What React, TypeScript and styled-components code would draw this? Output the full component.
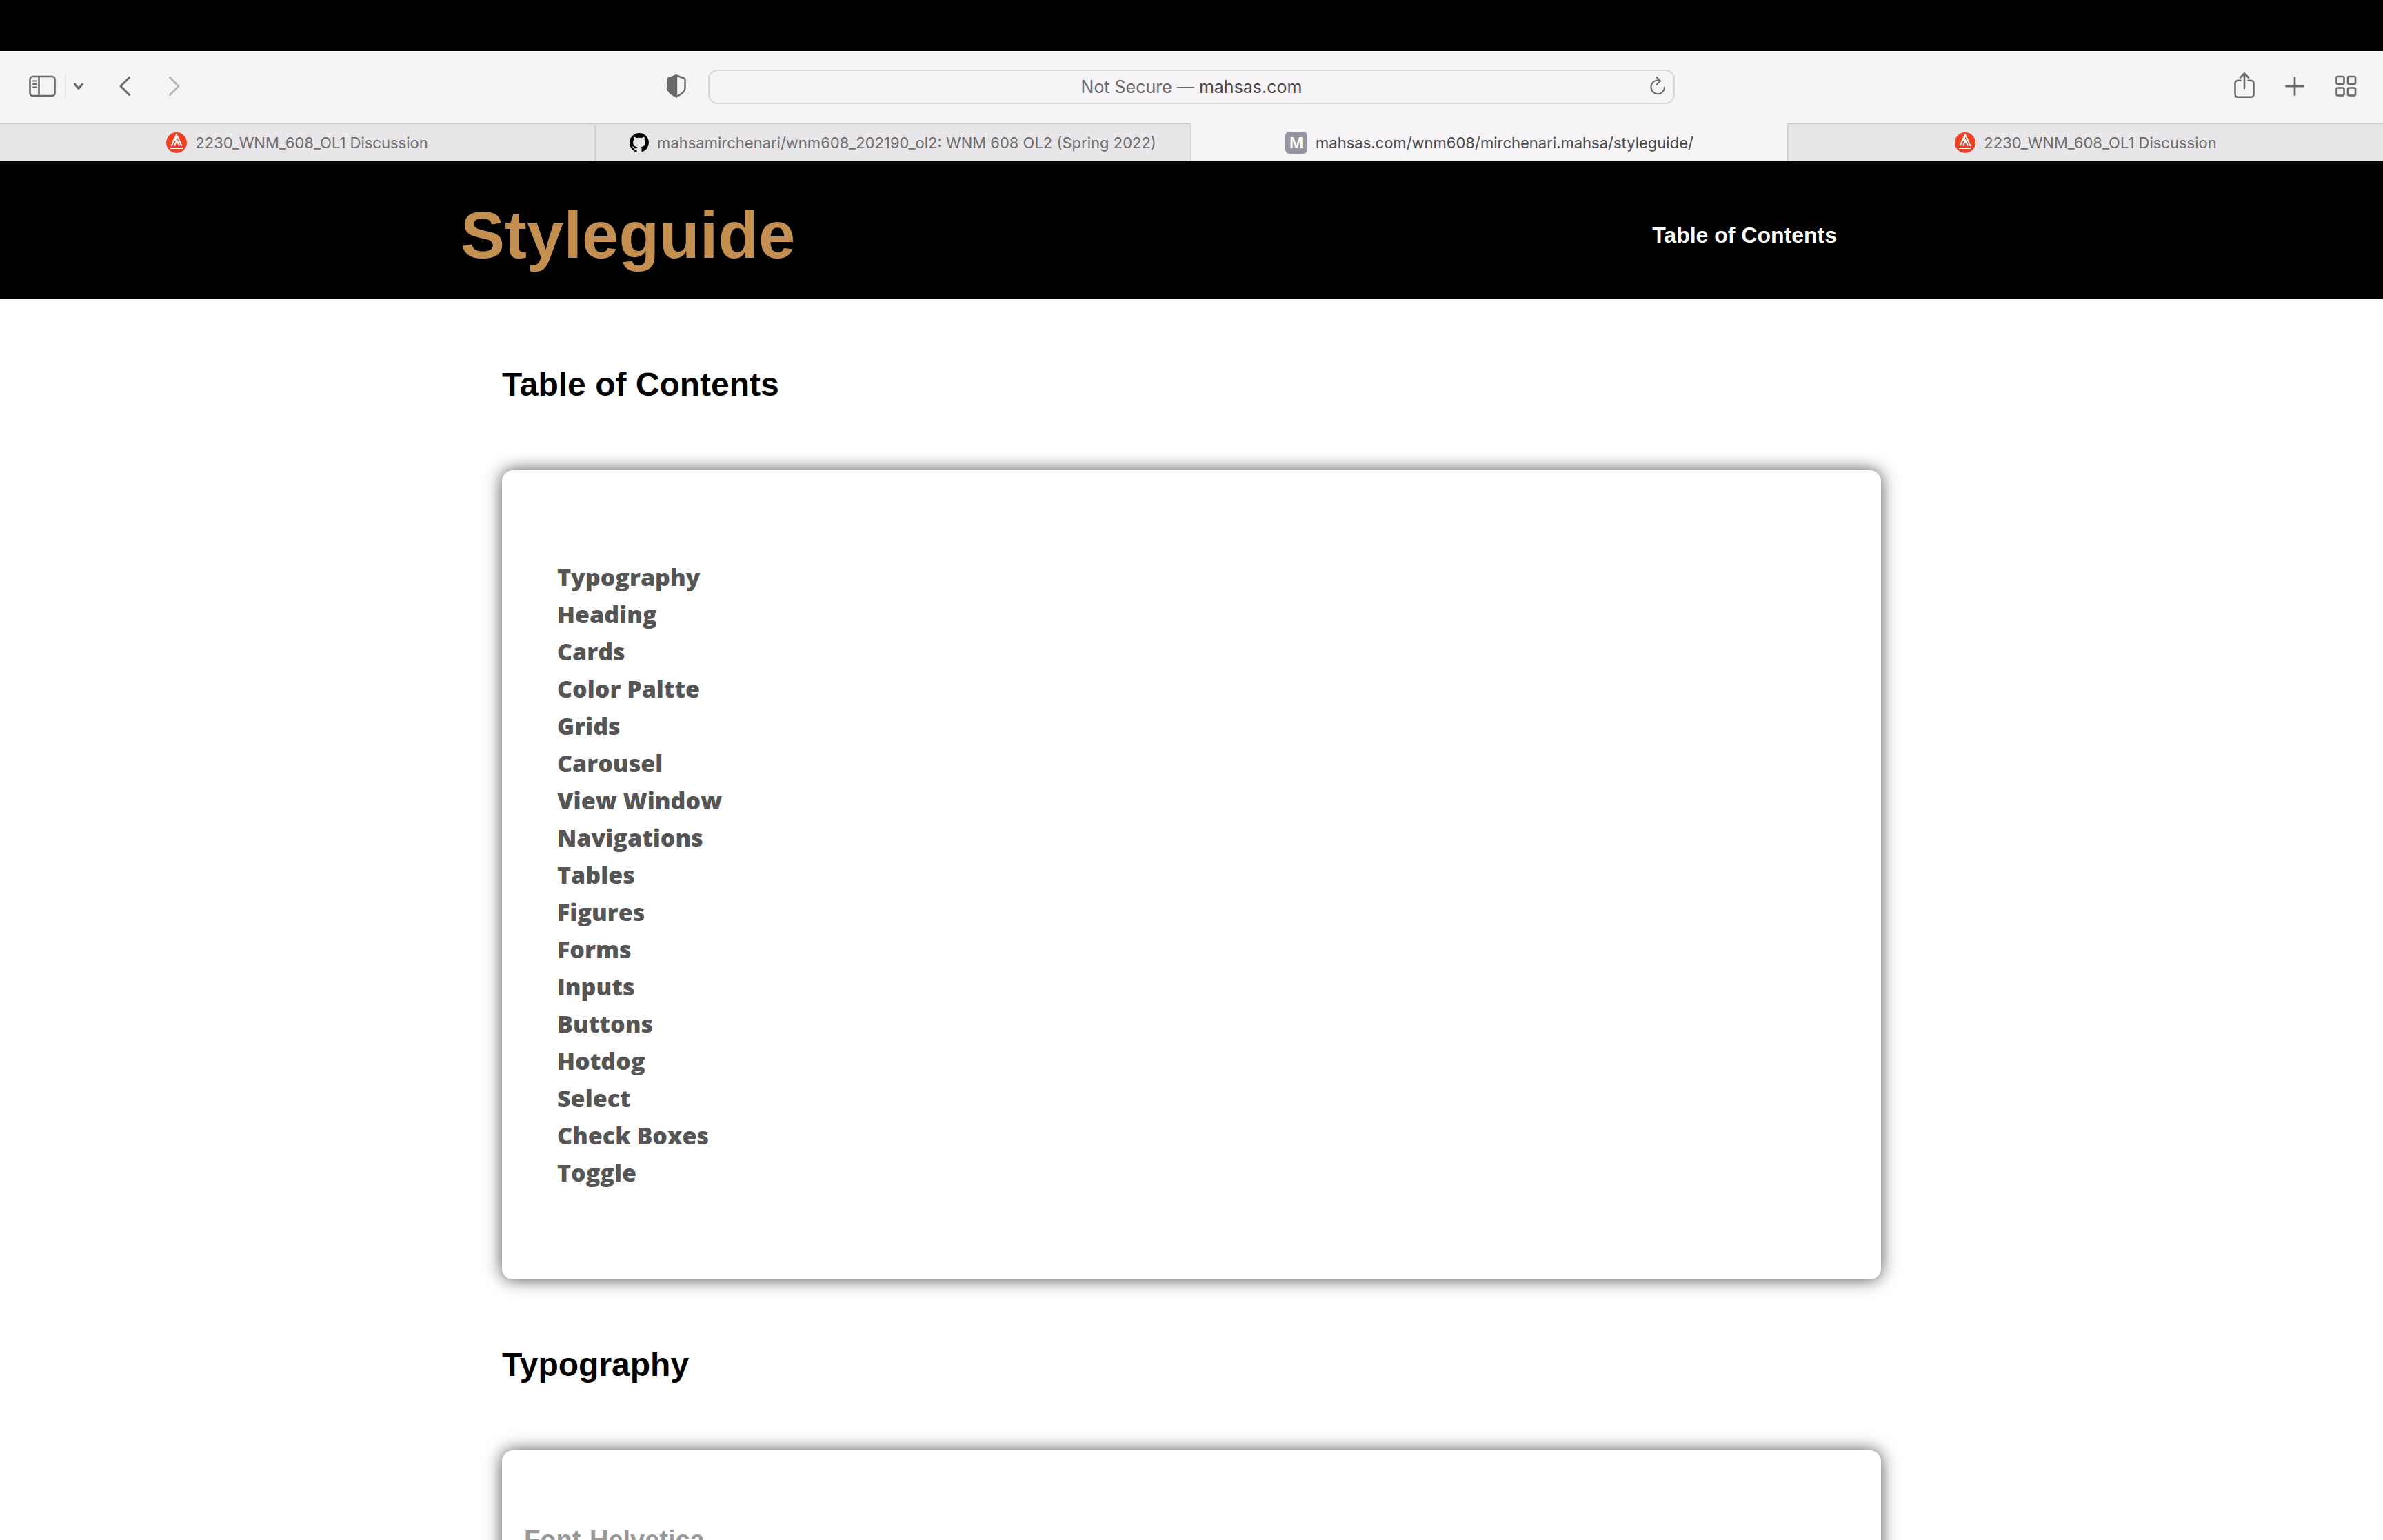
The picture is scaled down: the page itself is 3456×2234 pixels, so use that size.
import React from "react";
import styled, { createGlobalStyle } from "styled-components";

const chrome = `Inter, "Liberation Sans", sans-serif`;
const helvetica = `"Liberation Sans", Arial, sans-serif`;

const GlobalStyle = createGlobalStyle`
  *, *::before, *::after { box-sizing: border-box; }
  body { margin: 0; background: #fff; font-family: ${helvetica}; }
  button { padding: 0; border: 0; background: none; color: inherit; font: inherit; }
  a { color: inherit; text-decoration: none; }
`;

const Screen = styled.div`
  display: flex;
  flex-direction: column;
  height: 100vh;
  overflow: hidden;
`;

const CameraBar = styled.div`
  flex: none;
  height: 74px;
  background: #000;
`;

const Toolbar = styled.div`
  flex: none;
  display: grid;
  grid-template-columns: 1fr 1402px 1fr;
  align-items: center;
  height: 104px;
  background: #f6f4f6;
  color: #6a686a;
  font-family: ${chrome};
`;

const ToolGroup = styled.div<{ $end?: boolean }>`
  display: flex;
  align-items: center;
  justify-content: ${(p) => (p.$end ? "flex-end" : "flex-start")};
  padding: 0 38px 2px;
`;

const IconButton = styled.button<{ $gap?: number; $faded?: boolean }>`
  display: flex;
  margin-left: ${(p) => p.$gap ?? 0}px;
  opacity: ${(p) => (p.$faded ? 0.45 : 1)};
`;

const Separator = styled.span`
  width: 2px;
  height: 36px;
  margin-left: 12px;
  background: #e5e3e5;
`;

const ShieldButton = styled(IconButton)`
  margin-left: auto;
  margin-right: -6px;
`;

const AddressBar = styled.div`
  display: flex;
  align-items: center;
  height: 50px;
  padding: 0 10px 0 36px;
  border: 2px solid #d9d7d9;
  border-radius: 14px;
`;

const Address = styled.div`
  flex: 1;
  text-align: center;
  font-size: 25px;
  line-height: 32px;
  color: #6a686a;
`;

const Host = styled.span`
  color: #4a484a;
`;

const Tabs = styled.nav`
  flex: none;
  display: grid;
  grid-template-columns: repeat(4, 1fr);
  height: 56px;
  font-family: ${chrome};
  font-size: 22px;
  line-height: 28px;
`;

const Tab = styled.button<{ $active?: boolean; $edge?: "left" | "right" }>`
  display: flex;
  align-items: center;
  justify-content: center;
  gap: 12px;
  padding-top: 2px;
  color: ${(p) => (p.$active ? "#4a484a" : "#6f6d6f")};
  background: ${(p) =>
    p.$active ? "#f6f4f6" : "linear-gradient(#c4c2c4 1px, #dad8da 2px, #e8e6e8 6px)"};
  ${(p) => p.$edge && `border-${p.$edge}: 2px solid #d2d0d2;`}
`;

const LetterIcon = styled.span`
  width: 32px;
  height: 32px;
  border-radius: 6px;
  background: #9696a2;
  color: #fff;
  font-size: 22px;
  font-weight: 600;
  line-height: 32px;
  text-align: center;
`;

const Page = styled.div`
  flex: 1;
  min-height: 0;
  overflow: hidden;
`;

const Header = styled.header`
  height: 200px;
  padding: 14px 64px 0;
  background: #000;
`;

const HeaderInner = styled.div`
  display: flex;
  align-items: center;
  justify-content: space-between;
  max-width: 2120px;
  height: 100%;
  margin: 0 auto;
  padding-right: 124px;
`;

const SiteTitle = styled.h1`
  margin: 0;
  font-size: 96px;
  line-height: 112px;
  color: #c49052;
`;

const NavLink = styled.a`
  font-size: 32px;
  font-weight: 700;
  line-height: 40px;
  color: #fff;
`;

const Main = styled.main`
  max-width: 2000px;
  margin: 0 auto;
`;

const SectionTitle = styled.h2`
  margin: 0;
  padding: 96px 0;
  font-size: 48px;
  line-height: 56px;
  color: #000;
`;

const Card = styled.section<{ $inset: string }>`
  padding: ${(p) => p.$inset};
  border-radius: 16px;
  background: #fff;
  box-shadow: 0 0 24px rgba(0, 0, 0, 0.7);
`;

const Contents = styled.ul`
  margin: 0;
  padding: 0;
  list-style: none;
  font-family: "Open Sans", ${helvetica};
  font-size: 34px;
  font-weight: 800;
  line-height: 54px;
  color: #555;
`;

const Sample = styled.h3`
  margin: 0;
  font-size: 38px;
  line-height: 44px;
  color: #999;
`;

const line = { fill: "none", stroke: "currentColor", strokeLinecap: "round", strokeLinejoin: "round" } as const;

const SidebarIcon = () => (
  <svg width="44" height="36" viewBox="0 0 44 36" {...line} strokeWidth="2.6">
    <rect x="5.500" y="4" width="36" height="28" rx="4" />
    <path d="M18.500 4v28" />
    <path d="M10 10.500h4.500M10 15h4.500M10 19.500h4.500" strokeWidth="2" />
  </svg>
);

const DownIcon = () => (
  <svg width="16" height="12" viewBox="0 0 16 12" {...line} strokeWidth="3">
    <path d="M2.500 3l5.500 6.500L13.500 3" />
  </svg>
);

const BackIcon = () => (
  <svg width="18" height="30" viewBox="0 0 18 30" {...line} strokeWidth="3">
    <path d="M15.500 2.500L3 15l12.500 12.500" />
  </svg>
);

const ForwardIcon = () => (
  <svg width="18" height="30" viewBox="0 0 18 30" {...line} strokeWidth="3">
    <path d="M2.500 2.500L15 15 2.500 27.500" />
  </svg>
);

const ShieldIcon = () => (
  <svg width="28" height="34" viewBox="0 0 28 34" {...line} strokeWidth="2.4">
    <path d="M14 1.500l11 4a2 2 0 0 1 1.500 2V20c0 5-5 8.500-12.500 12.500C6.500 28.500 1.500 25 1.500 20V7.500a2 2 0 0 1 1.500-2z" />
    <path d="M14 1.500v31C6.500 28.500 1.500 25 1.500 20V7.500a2 2 0 0 1 1.500-2z" fill="currentColor" />
  </svg>
);

const ReloadIcon = () => (
  <svg width="26" height="30" viewBox="0 0 26 30" {...line} strokeWidth="2">
    <path d="M16 6A9.800 9.800 0 1 0 23 15.500" />
    <path d="M11.500 1l5.500 5.500-5.500 5.500" />
  </svg>
);

const ShareIcon = () => (
  <svg width="32" height="40" viewBox="0 0 32 40" {...line} strokeWidth="2.6">
    <path d="M10.500 11.800H6.500a4 4 0 0 0-4 4v16a4 4 0 0 0 4 4h19a4 4 0 0 0 4-4v-16a4 4 0 0 0-4-4h-4" />
    <path d="M16 23V1.500M10 7.500l6-6 6 6" />
  </svg>
);

const PlusIcon = () => (
  <svg width="28" height="28" viewBox="0 0 28 28" {...line} strokeWidth="2.800">
    <path d="M14 1.500v25M1.500 14h25" />
  </svg>
);

const GridIcon = () => (
  <svg width="32" height="32" viewBox="0 0 32 32" {...line} strokeWidth="2.6">
    <rect x="2.500" y="2" width="11" height="11" rx="2" />
    <rect x="19" y="2" width="11" height="11" rx="2" />
    <rect x="2.500" y="18.500" width="11" height="11" rx="2" />
    <rect x="19" y="18.500" width="11" height="11" rx="2" />
  </svg>
);

const AcademyIcon = () => (
  <svg width="30" height="30" viewBox="0 0 30 30" fill="none">
    <circle cx="15" cy="15" r="15" fill="#ee4023" />
    <path
      d="M7 19.500c1.500-1 3-5 3.500-7L15 3.500l4 8c1 2.500 2 6.500 4 8M12 19.500l3.500-8 3.500 8M15 3.500l-2 9"
      stroke="#fff"
      strokeWidth="2"
    />
    <path d="M6 23h18" stroke="#fff" strokeWidth="2" />
  </svg>
);

const GithubIcon = () => (
  <svg width="28" height="28" viewBox="0 0 16 16" fill="#000">
    <path d="M8 0C3.58 0 0 3.58 0 8c0 3.540 2.290 6.530 5.470 7.590.4.070.55-.17.55-.38 0-.19-.01-.82-.01-1.490-2.010.37-2.530-.49-2.690-.94-.09-.23-.48-.94-.82-1.130-.28-.15-.68-.52-.01-.53.63-.01 1.080.58 1.230.82.72 1.210 1.870.87 2.330.66.07-.52.28-.87.51-1.070-1.780-.2-3.640-.89-3.640-3.950 0-.87.31-1.590.82-2.150-.08-.2-.36-1.020.08-2.120 0 0 .67-.21 2.200.82.64-.18 1.320-.27 2-.27s1.360.09 2 .27c1.530-1.040 2.200-.82 2.200-.82.44 1.100.16 1.920.08 2.120.51.56.82 1.270.82 2.150 0 3.070-1.870 3.750-3.650 3.950.29.25.54.73.54 1.480 0 1.070-.01 1.930-.01 2.200 0 .21.15.46.55.38A8.010 8.010 0 0 0 16 8c0-4.420-3.580-8-8-8z" />
  </svg>
);

const contents = [
  "Typography", "Heading", "Cards", "Color Paltte", "Grids", "Carousel",
  "View Window", "Navigations", "Tables", "Figures", "Forms", "Inputs",
  "Buttons", "Hotdog", "Select", "Check Boxes", "Toggle",
];

const slug = (text: string) => `#${text.toLowerCase().replace(/ /g, "-")}`;

export default function App() {
  return (
    <Screen>
      <GlobalStyle />
      <CameraBar />
      <Toolbar>
        <ToolGroup>
          <IconButton aria-label="Sidebar"><SidebarIcon /></IconButton>
          <Separator />
          <IconButton aria-label="Tab groups" $gap={10}><DownIcon /></IconButton>
          <IconButton aria-label="Back" $gap={50}><BackIcon /></IconButton>
          <IconButton aria-label="Forward" $gap={54} $faded><ForwardIcon /></IconButton>
          <ShieldButton aria-label="Privacy report"><ShieldIcon /></ShieldButton>
        </ToolGroup>
        <AddressBar>
          <Address>Not Secure — <Host>mahsas.com</Host></Address>
          <IconButton aria-label="Reload"><ReloadIcon /></IconButton>
        </AddressBar>
        <ToolGroup $end>
          <IconButton aria-label="Share"><ShareIcon /></IconButton>
          <IconButton aria-label="New tab" $gap={43}><PlusIcon /></IconButton>
          <IconButton aria-label="Tab overview" $gap={44}><GridIcon /></IconButton>
        </ToolGroup>
      </Toolbar>
      <Tabs>
        <Tab $edge="right"><AcademyIcon />2230_WNM_608_OL1 Discussion</Tab>
        <Tab $edge="right"><GithubIcon />mahsamirchenari/wnm608_202190_ol2: WNM 608 OL2 (Spring 2022)</Tab>
        <Tab $active><LetterIcon>M</LetterIcon>mahsas.com/wnm608/mirchenari.mahsa/styleguide/</Tab>
        <Tab $edge="left"><AcademyIcon />2230_WNM_608_OL1 Discussion</Tab>
      </Tabs>
      <Page>
        <Header>
          <HeaderInner>
            <SiteTitle>Styleguide</SiteTitle>
            <NavLink href="#table-of-contents">Table of Contents</NavLink>
          </HeaderInner>
        </Header>
        <Main>
          <SectionTitle id="table-of-contents">Table of Contents</SectionTitle>
          <Card $inset="128px 80px">
            <Contents>
              {contents.map((item) => (
                <li key={item}><a href={slug(item)}>{item}</a></li>
              ))}
            </Contents>
          </Card>
          <SectionTitle id="typography">Typography</SectionTitle>
          <Card $inset="108px 32px">
            <Sample>Font-Helvetica</Sample>
          </Card>
        </Main>
      </Page>
    </Screen>
  );
}
